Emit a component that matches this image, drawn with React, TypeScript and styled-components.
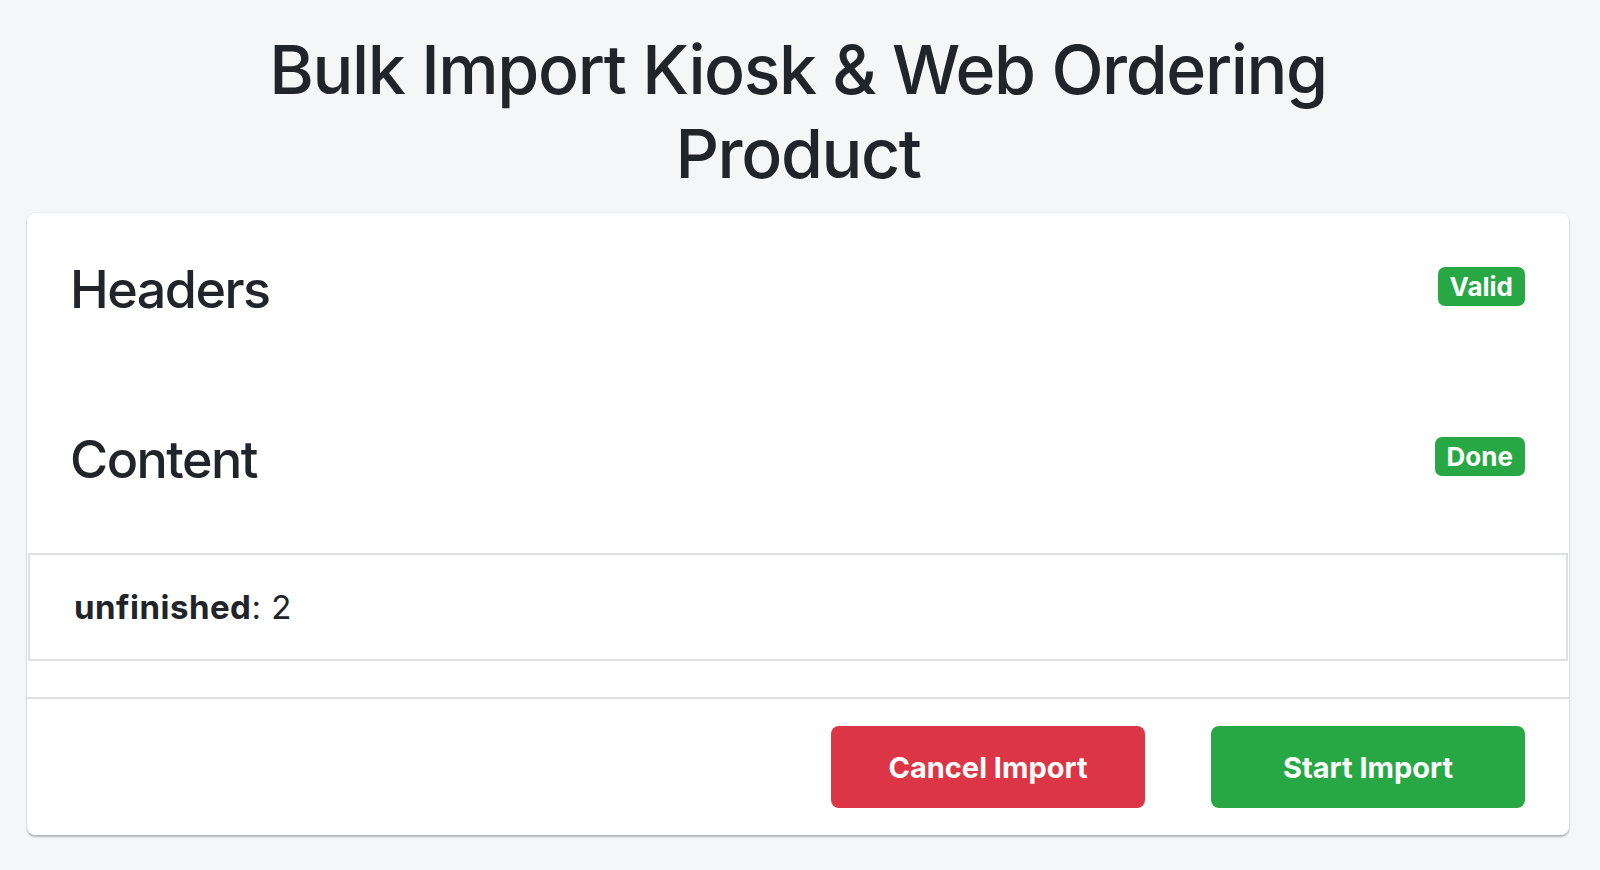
import styled, { createGlobalStyle } from 'styled-components';

const GlobalStyle = createGlobalStyle`
  html, body {
    margin: 0;
    padding: 0;
    background-color: #f5f6f8;
    color: #212529;
    font-family: Inter, 'Noto Sans', 'Liberation Sans', sans-serif;
  }
`;

interface Section {
  title: string; // section name
  status: string; // badge text
}

const sections: Section[] = [
  { title: 'Headers', status: 'Valid' },
  { title: 'Content', status: 'Done' },
];

const stats = [{ label: 'unfinished', value: 2 }];

export default function App() {
  return (
    <>
      <GlobalStyle />
      <Page>
        <Title>
          Bulk Import Kiosk &amp; Web Ordering
          <br />
          Product
        </Title>
        <Card>
          <CardBody>
            {sections.map((section) => (
              <SectionRow key={section.title}>
                <SectionTitle>{section.title}</SectionTitle>
                <Badge>{section.status}</Badge>
              </SectionRow>
            ))}
          </CardBody>
          <StatList>
            {stats.map((item) => (
              <StatItem key={item.label}>
                <strong>{item.label}</strong>: {item.value}
              </StatItem>
            ))}
          </StatList>
          <Spacer />
          <CardFooter>
            <Button variant="danger">Cancel Import</Button>
            <Button variant="success">Start Import</Button>
          </CardFooter>
        </Card>
      </Page>
    </>
  );
}

const Page = styled.div`
  padding: 27px 31px 36px 27px;
`;

const Title = styled.h1`
  margin: 0 0 18px;
  text-align: center;
  font-size: 68px;
  font-weight: 500;
  line-height: 84px;
  letter-spacing: -1.4px;
`;

const Card = styled.div`
  background-color: #fff;
  border-radius: 8px;
  box-shadow: 0 0 2px rgba(0, 0, 0, 0.12), 0 2px 2px rgba(0, 0, 0, 0.25);
  overflow: hidden;
`;

const CardBody = styled.div`
  padding: 46px 44px 0 43px;
  display: flex;
  flex-direction: column;
  gap: 108px;
  margin-bottom: 62px;
`;

const SectionRow = styled.div`
  display: flex;
  justify-content: space-between;
  align-items: flex-start;
`;

const SectionTitle = styled.h3`
  margin: 0;
  font-size: 52px;
  font-weight: 500;
  line-height: 62px;
  letter-spacing: -1.5px;
`;

const Badge = styled.span`
  margin-top: 8px;
  padding: 6px 12px;
  border-radius: 7px;
  background-color: #28a745;
  color: #fff;
  font-size: 26px;
  font-weight: 700;
  line-height: 27px;
`;

const StatList = styled.ul`
  list-style: none;
  margin: 0 1px;
  padding: 0;
`;

const StatItem = styled.li`
  border: 2px solid #dfe0e2;
  padding: 27px 44px;
  font-size: 33px;
  line-height: 50px;
  letter-spacing: 0.5px;

  strong {
    font-weight: 700;
  }
`;

const Spacer = styled.div`
  height: 36px;
`;

const CardFooter = styled.div`
  border-top: 2px solid #dfe0e2;
  padding: 27px 44px 27px;
  display: flex;
  justify-content: flex-end;
  gap: 66px;
`;

const Button = styled.button<{ variant: 'danger' | 'success' }>`
  width: 314px;
  height: 82px;
  border: none;
  border-radius: 8px;
  background-color: ${({ variant }) => (variant === 'danger' ? '#dc3545' : '#28a745')};
  color: #fff;
  font-family: Inter, 'Noto Sans', 'Liberation Sans', sans-serif;
  font-size: 29px;
  font-weight: 700;
  cursor: pointer;
`;
